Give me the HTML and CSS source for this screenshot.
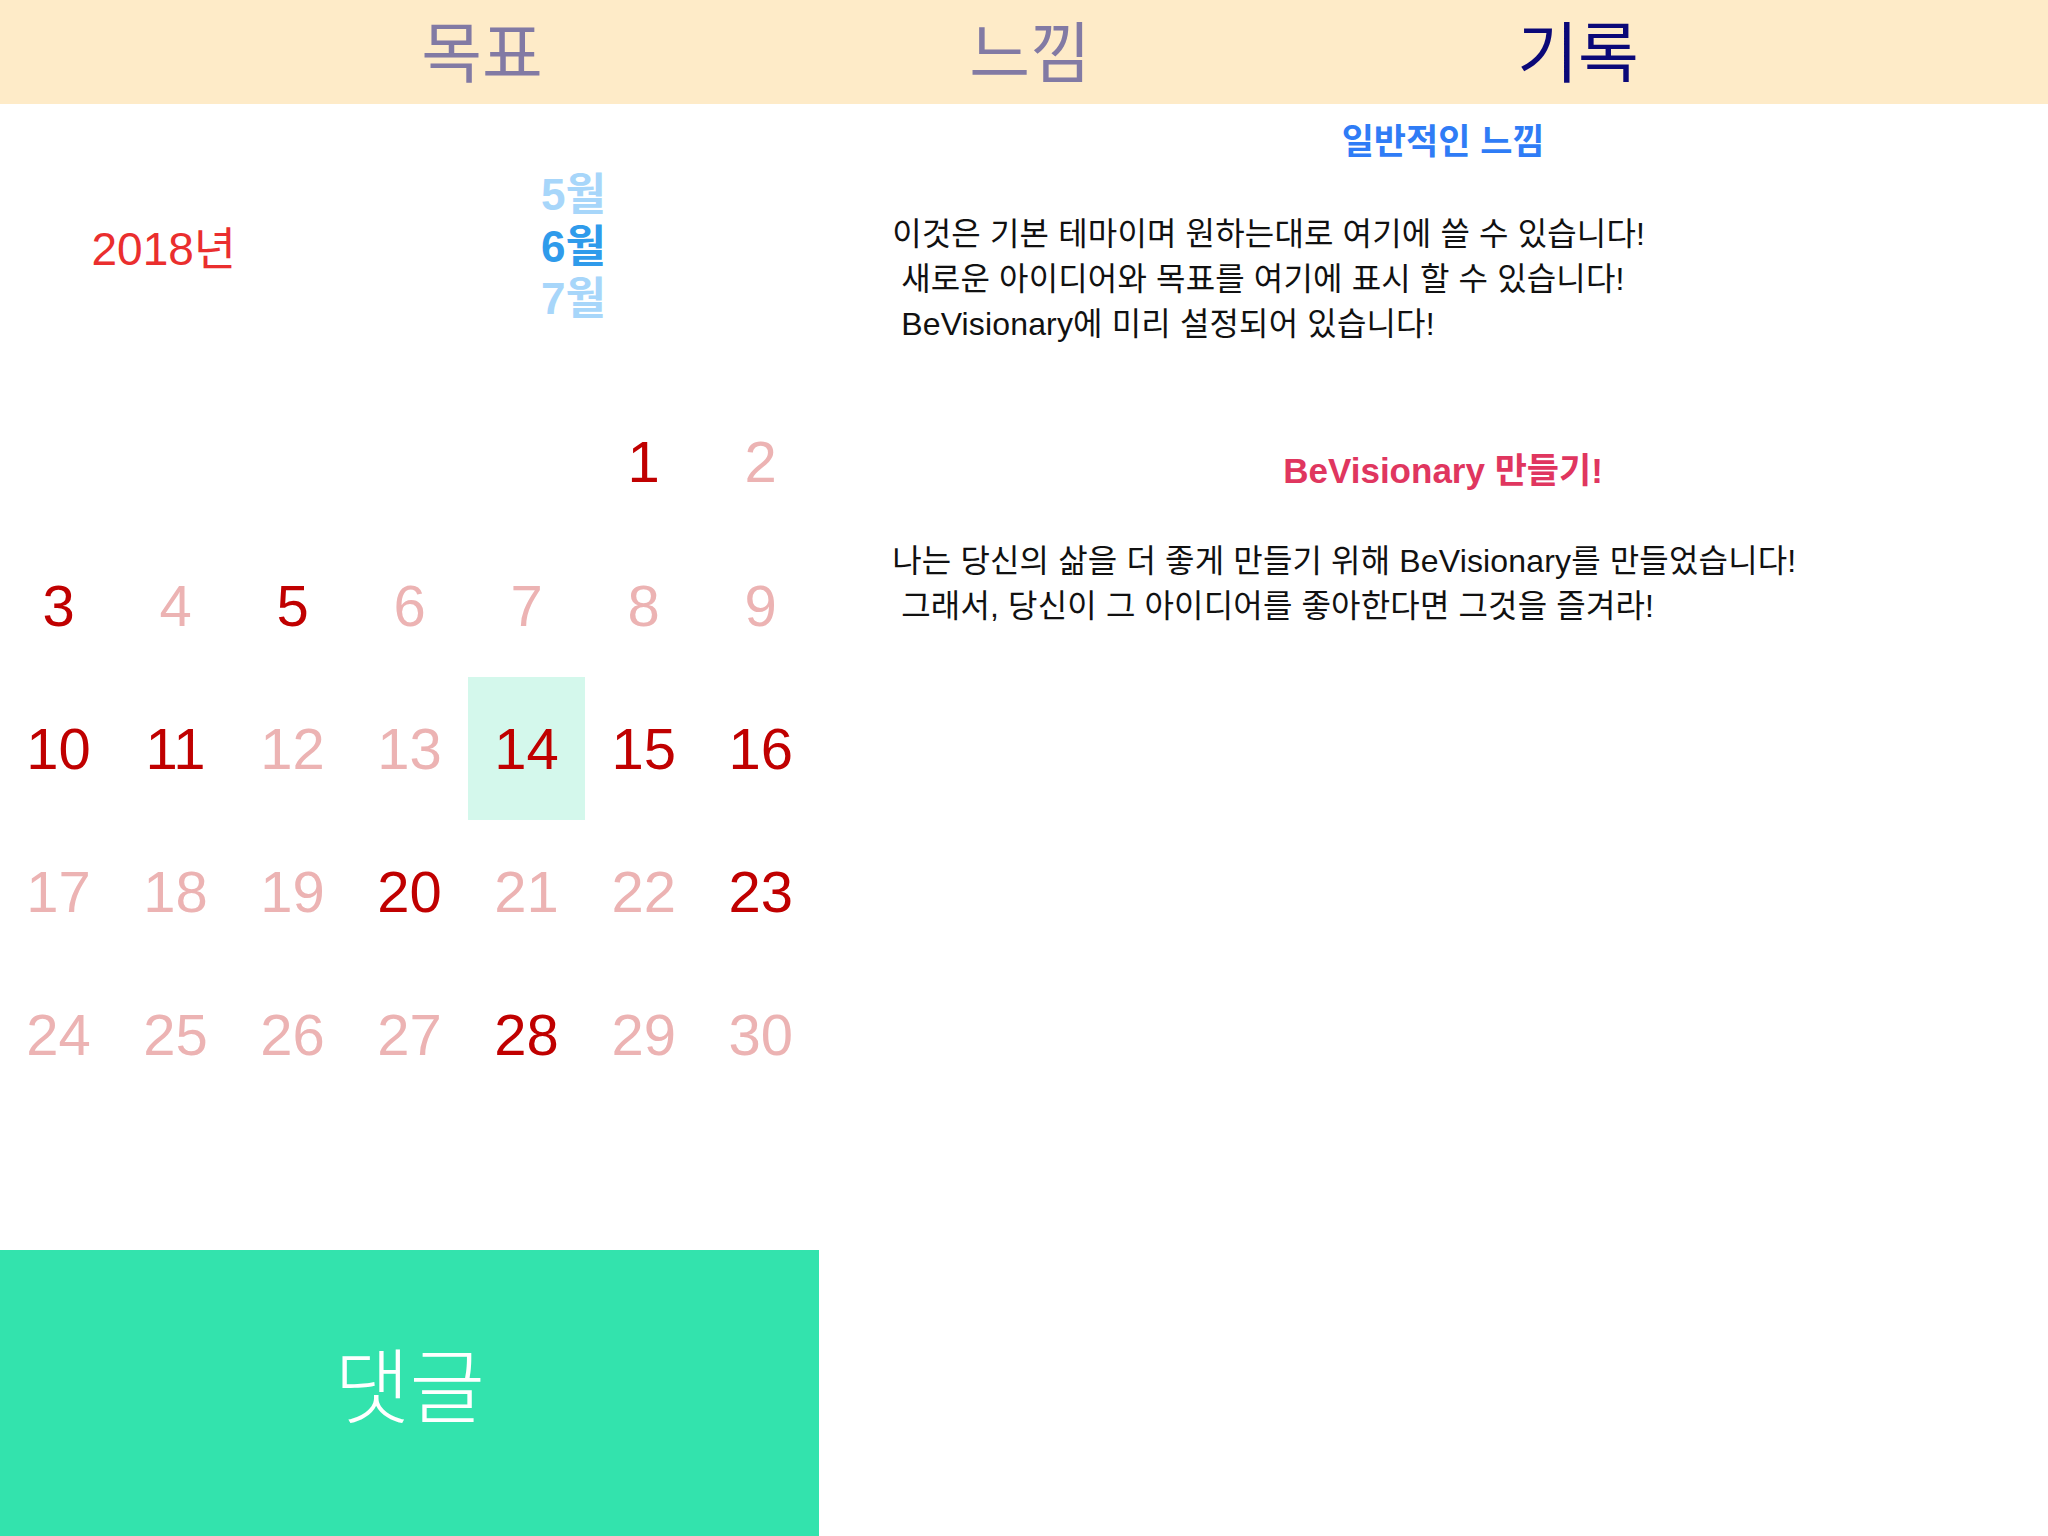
FILE: index.html
```html
<!DOCTYPE html>
<html lang="ko">
<head>
<meta charset="utf-8">
<title>BeVisionary</title>
<link rel="stylesheet" href="styles.css">
</head>
<body>
<div class="app">
  <header class="tabs">
    <div class="tab tab-muted">목표</div>
    <div class="tab tab-muted">느낌</div>
    <div class="tab tab-active">기록</div>
  </header>
  <div class="main">
    <section class="left">
      <div class="date-head">
        <div class="year">2018년</div>
        <div class="months">
          <div class="month month-faded">5월</div>
          <div class="month month-current">6월</div>
          <div class="month month-faded">7월</div>
        </div>
      </div>
      <div class="calendar">
        <div class="day"></div><div class="day"></div><div class="day"></div><div class="day"></div><div class="day"></div>
        <div class="day on">1</div><div class="day off">2</div>
        <div class="day on">3</div><div class="day off">4</div><div class="day on">5</div><div class="day off">6</div><div class="day off">7</div><div class="day off">8</div><div class="day off">9</div>
        <div class="day on">10</div><div class="day on">11</div><div class="day off">12</div><div class="day off">13</div><div class="day on today">14</div><div class="day on">15</div><div class="day on">16</div>
        <div class="day off">17</div><div class="day off">18</div><div class="day off">19</div><div class="day on">20</div><div class="day off">21</div><div class="day off">22</div><div class="day on">23</div>
        <div class="day off">24</div><div class="day off">25</div><div class="day off">26</div><div class="day off">27</div><div class="day on">28</div><div class="day off">29</div><div class="day off">30</div>
      </div>
      <div class="comment">댓글</div>
    </section>
    <section class="right">
      <h2 class="title title-blue">일반적인 느낌</h2>
      <p class="body body-first">이것은 기본 테마이며 원하는대로 여기에 쓸 수 있습니다!
 새로운 아이디어와 목표를 여기에 표시 할 수 있습니다!
 BeVisionary에 미리 설정되어 있습니다!</p>
      <h2 class="title title-red">BeVisionary 만들기!</h2>
      <p class="body body-second">나는 당신의 삶을 더 좋게 만들기 위해 BeVisionary를 만들었습니다!
 그래서, 당신이 그 아이디어를 좋아한다면 그것을 즐겨라!</p>
    </section>
  </div>
</div>
</body>
</html>
```

FILE: styles.css
```css
* {
  box-sizing: border-box;
}

html, body {
  margin: 0;
  padding: 0;
  background: #ffffff;
}

.app {
  width: 2048px;
  height: 1536px;
  overflow: hidden;
  font-family: "Liberation Sans", "Noto Sans CJK KR", sans-serif;
}

.tabs {
  height: 104px;
  background: #feebc8;
  display: grid;
  grid-template-columns: repeat(3, 548px);
  padding-left: 208px;
  align-items: start;
}

.tab {
  text-align: center;
  font-family: "Noto Sans CJK KR", sans-serif;
  font-size: 66px;
  line-height: 96px;
  font-weight: 400;
}

.tab-muted {
  color: #827aa4;
}

.tab-active {
  color: #0b0878;
}

.main {
  display: flex;
  height: 1432px;
}

.left {
  width: 40%;
  flex: none;
  display: flex;
  flex-direction: column;
}

.date-head {
  height: 286.4px;
  display: grid;
  grid-template-columns: 40% 60%;
  align-items: center;
}

.year {
  text-align: center;
  color: #ea2e2e;
  font-size: 46px;
  font-family: "Liberation Sans", "Noto Sans CJK KR", sans-serif;
  padding-bottom: 4px;
}

.months {
  display: flex;
  flex-direction: column;
  align-items: center;
}

.month {
  font-size: 44px;
  line-height: 52px;
  font-weight: 700;
}

.month-current {
  color: #2f9beb;
}

.month-faded {
  color: #a7d6fa;
}

.calendar {
  display: grid;
  grid-template-columns: repeat(7, 1fr);
  grid-auto-rows: 143.2px;
  height: 859.2px;
}

.day {
  display: flex;
  align-items: center;
  justify-content: center;
  font-size: 58px;
  font-family: "Liberation Sans", sans-serif;
}

.day.on {
  color: #c00000;
}

.day.off {
  color: #ecb3b3;
}

.day.today {
  background: #d4f8ec;
}

.comment {
  height: 286.4px;
  background: #33e3ad;
  color: #ffffff;
  display: flex;
  align-items: center;
  justify-content: center;
  font-family: "Noto Sans CJK KR", sans-serif;
  font-weight: 300;
  font-size: 82px;
  padding-bottom: 22px;
}

.right {
  flex: 1;
  padding: 15px 54px 0 73px;
}

.title {
  margin: 0;
  text-align: center;
  font-size: 35px;
  line-height: 46px;
  font-weight: 700;
  font-family: "Liberation Sans", "Noto Sans CJK KR", sans-serif;
}

.title-blue {
  color: #2f7cf6;
}

.title-red {
  color: #e0365f;
  margin-top: 101px;
}

.body {
  margin: 0;
  white-space: pre-wrap;
  font-size: 32px;
  line-height: 45px;
  letter-spacing: 0.15px;
  color: #111111;
  font-family: "Liberation Sans", "Noto Sans CJK KR", sans-serif;
}

.body-first {
  margin-top: 47px;
}

.body-second {
  margin-top: 45px;
}
```
